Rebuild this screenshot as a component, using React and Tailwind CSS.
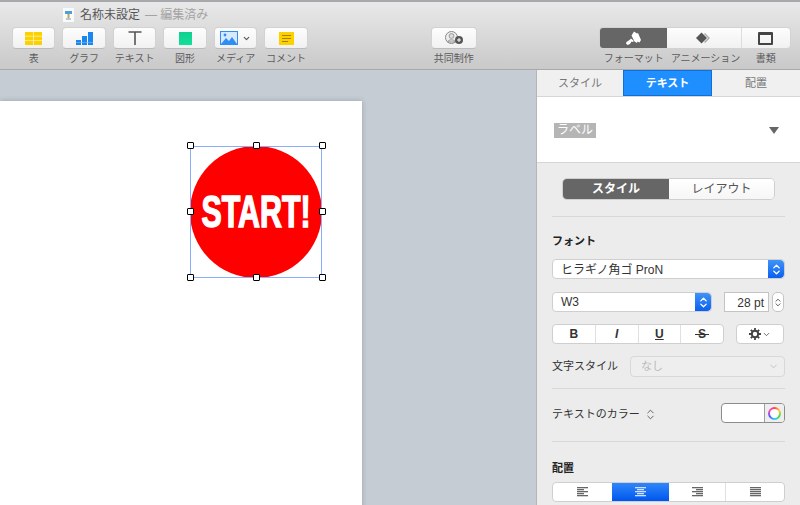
import { ChevronDown, ChevronsUpDown } from "lucide-react";

const font = { fontFamily: '"Liberation Sans", "Noto Sans CJK JP", sans-serif' };

const btn = "h-[22px] bg-gradient-to-b from-[#fdfdfd] to-[#f1f1f1] rounded-[4px] border border-[#d2d2d2] border-b-[#bcbcbc] flex items-center justify-center";

const ToolItem = ({ label, width, children }) => (
  <div className="flex flex-col items-center" style={{ width }}>
    <div className={`${btn} w-full`}>{children}</div>
    <span className="text-[10px] leading-[12px] mt-[4px] text-[#5c5c5c] whitespace-nowrap">{label}</span>
  </div>
);

const Toolbar = () => (
  <div className="h-[70px] shrink-0 bg-gradient-to-b from-[#e9e9ea] to-[#c9c9ca] border-b border-[#a9a9a9] border-t-2 border-t-[#a6a8ab] flex flex-col">
    <div className="h-[25px] flex items-center pl-[63px]">
      <svg width="11" height="14" viewBox="0 0 11 14">
        <rect width="11" height="14" fill="#fafafa" />
        <rect x="2" y="3" width="7" height="3" fill="#4aa0dc" />
        <path d="M4.500 6h2v4h-2z" fill="#d0a53c" />
        <path d="M3 10.500h5v1H3z" fill="#5aa0c0" />
      </svg>
      <span className="ml-[6px] text-[12px] leading-none text-[#555]">名称未設定</span>
      <span className="ml-[5px] text-[12px] leading-none text-[#a3a3a3]">— 編集済み</span>
    </div>
    <div className="flex pl-[12px]">
      <div className="flex gap-[7.2px]">
        <ToolItem label="表" width={43.3}>
          <svg width="17" height="13" viewBox="0 0 17 13">
            <rect width="17" height="13" fill="#fdd000" />
            <path d="M0 4.200h17M0 8.600h17M8.500 0v13" stroke="#fff3b0" strokeWidth="0.8" />
          </svg>
        </ToolItem>
        <ToolItem label="グラフ" width={43.3}>
          <svg width="17" height="13" viewBox="0 0 17 13">
            <rect x="0" y="8" width="5" height="5" fill="#1b86ee" />
            <rect x="6" y="4" width="5" height="9" fill="#1b86ee" />
            <rect x="12" y="0" width="5" height="13" fill="#1b86ee" />
            <path d="M0 10.500h17" stroke="#7cbcf8" strokeWidth="0.6" />
          </svg>
        </ToolItem>
        <ToolItem label="テキスト" width={43.3}>
          <svg width="14" height="14" viewBox="0 0 14 14">
            <path d="M0.500 1h13M7 1v13" stroke="#555" strokeWidth="1.6" fill="none" />
          </svg>
        </ToolItem>
        <ToolItem label="図形" width={43.3}>
          <div className="w-[13px] h-[13px] bg-gradient-to-b from-[#12cf8f] to-[#0fe09a]" />
        </ToolItem>
        <ToolItem label="メディア" width={43.3}>
          <div className="flex items-center gap-[4px]">
            <svg width="18" height="14" viewBox="0 0 18 14">
              <rect width="18" height="14" fill="#2f8ef3" />
              <rect x="1" y="1" width="16" height="12" fill="#d7eafd" />
              <path d="M1 13l5-6 3 3 3-4 5 7z" fill="#2f8ef3" />
              <circle cx="5" cy="4" r="1.400" fill="#2f8ef3" />
            </svg>
            <ChevronDown size={9} strokeWidth={3} color="#555" />
          </div>
        </ToolItem>
        <ToolItem label="コメント" width={43.3}>
          <svg width="15" height="13" viewBox="0 0 15 13">
            <rect width="15" height="13" fill="#fdd000" />
            <path d="M3 3.500h9M3 6.500h9M3 9.500h6" stroke="#8a6d00" strokeWidth="0.8" />
          </svg>
        </ToolItem>
      </div>
      <div className="ml-[123px]">
        <ToolItem label="共同制作" width={46}>
          <svg width="20" height="14" viewBox="0 0 20 14">
            <circle cx="7.500" cy="6.500" r="6" fill="#eee" stroke="#888" />
            <circle cx="7.500" cy="5" r="2.400" fill="#ddd" stroke="#888" strokeWidth="0.8" />
            <path d="M3.500 11c1-3 7-3 8 0z" fill="#ddd" stroke="#888" strokeWidth="0.8" />
            <circle cx="15" cy="9" r="4" fill="#555" />
            <path d="M13 9h4M15 7v4" stroke="#fff" />
          </svg>
        </ToolItem>
      </div>
      <div className="ml-[122px] w-[192px]">
        <div className="h-[22px] flex rounded-[4px] overflow-hidden border border-[#d2d2d2] bg-gradient-to-b from-[#fdfdfd] to-[#f1f1f1]">
          <div className="w-[67px] bg-[#666] flex items-center justify-center">
            <svg width="17" height="15" viewBox="0 0 17 15">
              <path d="M9 0.500l3 2 1-0.500 3 7-1.500 2.500-2-1-0.500 1.500-2.500-1.500-3-6z" fill="#fff" />
              <path d="M6 7.500L9 10l-1.500 1-1-0.500-1.500 2.500-2.500 1L1 12.500 1.500 11 4.500 9z" fill="#fff" />
            </svg>
          </div>
          <div className="w-[75px] border-r border-[#ddd] flex items-center justify-center">
            <svg width="17" height="12" viewBox="0 0 17 12">
              <path d="M10 1l5 5-5 5-1-1 4-4-4-4z" fill="#aaa" />
              <path d="M6.500 0.500L12 6l-5.500 5.500L1 6z" fill="#555" />
            </svg>
          </div>
          <div className="flex-1 flex items-center justify-center">
            <div className="w-[15px] h-[13px] border-2 border-[#444] rounded-[1px] border-t-[3px]" />
          </div>
        </div>
        <div className="flex mt-[4px] text-[10px] leading-[12px] text-[#5c5c5c]">
          <span className="w-[72px] pl-[5px] whitespace-nowrap">フォーマット</span>
          <span className="w-[70px] whitespace-nowrap">アニメーション</span>
          <span className="flex-1 text-center">書類</span>
        </div>
      </div>
    </div>
  </div>
);

const Handle = ({ className }) => (
  <div className={`absolute w-[7px] h-[7px] bg-white border border-black rounded-[1px] ${className}`} />
);

const Canvas = () => (
  <div className="flex-1 relative bg-[#c5ccd4] overflow-hidden">
    <div className="absolute left-0 top-[31px] w-[362px] h-[500px] bg-white shadow-[0_0_5px_rgba(90,100,115,0.4)]" />
    <div className="absolute left-[190px] top-[76px] w-[132px] h-[132px]">
      <div className="absolute inset-0 rounded-full bg-[#ff0000] flex items-center justify-center">
        <span className="text-white font-bold text-[44px] leading-none whitespace-nowrap scale-x-[0.69] [-webkit-text-stroke:1.5px_white]">
          START!
        </span>
      </div>
      <div className="absolute inset-0 border border-[#8aaefc]" />
      <Handle className="left-[-3px] top-[-4px]" />
      <Handle className="left-[63px] top-[-4px]" />
      <Handle className="left-[129px] top-[-4px]" />
      <Handle className="left-[-3px] top-[62px]" />
      <Handle className="left-[129px] top-[62px]" />
      <Handle className="left-[-3px] top-[128px]" />
      <Handle className="left-[63px] top-[128px]" />
      <Handle className="left-[129px] top-[128px]" />
    </div>
  </div>
);

const BlueStepper = ({ width }) => (
  <div
    className="h-full bg-gradient-to-b from-[#3f93f8] to-[#0a5ff0] flex items-center justify-center rounded-r-[4px]"
    style={{ width }}
  >
    <ChevronsUpDown size={13} strokeWidth={2.5} color="#fff" />
  </div>
);

// lines of the paragraph alignment glyphs, x and width per row
const AlignIcon = ({ rows, color }) => (
  <svg width="11" height="10" viewBox="0 0 11 10">
    {rows.map(([x, w], i) => (
      <rect key={i} x={x} y={i * 2} width={w} height="1.300" fill={color} />
    ))}
  </svg>
);

const Sidebar = () => (
  <div className="w-[264px] shrink-0 bg-[#ececec] border-l border-[#b5b5b5] flex flex-col text-[#333]">
    <div className="h-[27px] shrink-0 flex text-[11px] text-[#777] bg-[#f0f0f0] border-b border-[#d6d6d6]">
      <div className="w-[86px] flex items-center justify-center">スタイル</div>
      <div className="w-[89px] flex items-center justify-center bg-[#1f8fff] text-white font-bold border border-[#1170d8]">テキスト</div>
      <div className="flex-1 flex items-center justify-center">配置</div>
    </div>
    <div className="h-[66px] shrink-0 bg-white border-b border-[#d6d6d6] flex items-center justify-between pl-[17px] pr-[21px] pt-[1px]">
      <span className="bg-[#b5b5b5] text-white text-[12px] leading-[15px] px-[3px]">ラベル</span>
      <div className="w-0 h-0 border-l-[5px] border-r-[5px] border-t-[7px] border-l-transparent border-r-transparent border-t-[#666]" />
    </div>
    <div className="px-[15px] flex-1">
      <div className="mx-[10px] mt-[15px] h-[22px] flex rounded-[5px] overflow-hidden border border-[#cfcfcf] text-[12px]">
        <div className="w-[106px] bg-[#666] text-white font-bold flex items-center justify-center">スタイル</div>
        <div className="flex-1 bg-gradient-to-b from-white to-[#f6f6f6] text-[#555] flex items-center justify-center">レイアウト</div>
      </div>
      <div className="h-px bg-[#d8d8d8] mt-[16px]" />
      <div className="text-[11px] leading-[14px] font-bold text-[#222] mt-[17px]">フォント</div>
      <div className="mt-[11px] h-[20px] flex rounded-[4px] bg-white border border-[#cfcfcf] overflow-hidden text-[12px]">
        <span className="flex-1 pl-[8px] leading-[21px] text-[#333]">ヒラギノ角ゴ ProN</span>
        <BlueStepper width={16} />
      </div>
      <div className="mt-[13px] h-[20px] flex items-center">
        <div className="w-[160px] h-[20px] flex rounded-[4px] bg-white border border-[#cfcfcf] overflow-hidden text-[12px]">
          <span className="flex-1 pl-[8px] leading-[19px]">W3</span>
          <BlueStepper width={16} />
        </div>
        <div className="ml-[12px] w-[45px] h-[20px] bg-white border border-[#c4c4c4] text-[12px] leading-[20px] text-right pr-[4px]">28 pt</div>
        <div className="ml-[3px] w-[12px] h-[20px] bg-white border border-[#c4c4c4] rounded-[5px] flex items-center justify-center">
          <ChevronsUpDown size={11} strokeWidth={2} color="#444" />
        </div>
      </div>
      <div className="mt-[12px] h-[20px] flex items-center">
        <div className="w-[172px] h-[20px] flex bg-white rounded-[4px] border border-[#cfcfcf] text-[12px] text-[#333] divide-x divide-[#e0e0e0]">
          <span className="flex-1 flex items-center justify-center font-bold">B</span>
          <span className="flex-1 flex items-center justify-center font-bold italic">I</span>
          <span className="flex-1 flex items-center justify-center font-bold underline">U</span>
          <span className="flex-1 flex items-center justify-center relative font-bold">
            S
            <span className="absolute left-[14px] right-[14px] top-[9px] h-px bg-[#333]" />
          </span>
        </div>
        <div className="ml-[12px] w-[48px] h-[20px] bg-white rounded-[4px] border border-[#cfcfcf] flex items-center justify-center gap-[1px]">
          <svg width="12" height="12" viewBox="0 0 12 12">
            <circle cx="6" cy="6" r="3.200" fill="none" stroke="#444" strokeWidth="2" />
            <path d="M6 0v2.500M6 9.500V12M0 6h2.500M9.500 6H12M1.800 1.800l1.800 1.800M8.400 8.400l1.800 1.800M1.800 10.200l1.800-1.800M8.400 3.600l1.800-1.800" stroke="#444" strokeWidth="1.800" />
          </svg>
          <ChevronDown size={9} strokeWidth={2} color="#444" />
        </div>
      </div>
      <div className="mt-[12px] h-[21px] flex items-center justify-between">
        <span className="text-[11px] text-[#333]">文字スタイル</span>
        <div className="w-[155px] h-[21px] border border-[#d8d8d8] rounded-[4px] bg-[#eeeeee] flex items-center justify-between pl-[10px] pr-[5px] text-[11px] text-[#bbb]">
          なし
          <ChevronDown size={11} strokeWidth={2} color="#c0c0c0" />
        </div>
      </div>
      <div className="h-px bg-[#d8d8d8] mt-[11px]" />
      <div className="mt-[14px] h-[20px] flex items-center justify-between">
        <div className="flex items-center text-[11px] text-[#333] pt-[2px]">
          テキストのカラー
          <ChevronsUpDown size={13} strokeWidth={1.500} color="#444" className="ml-[4px]" />
        </div>
        <div className="w-[64px] h-[20px] rounded-[4px] border border-[#8c8c8c] bg-white flex justify-end overflow-hidden">
          <div className="w-[20px] border-l border-[#a0a0a0] bg-[#eee] flex items-center justify-center">
            <div
              className="w-[13px] h-[13px] rounded-full p-[2px]"
              style={{ background: "conic-gradient(#f44,#fc3,#4d4,#3cf,#55f,#f4c,#f44)" }}
            >
              <div className="w-[9px] h-[9px] rounded-full bg-white" />
            </div>
          </div>
        </div>
      </div>
      <div className="h-px bg-[#d8d8d8] mt-[18px]" />
      <div className="text-[11px] leading-[14px] font-bold text-[#222] mt-[19px]">配置</div>
      <div className="mt-[7px] h-[20px] flex bg-white rounded-[4px] border border-[#cfcfcf] overflow-hidden">
        <div className="w-[59px] flex items-center justify-center">
          <AlignIcon color="#666" rows={[[0, 11], [0, 7], [0, 11], [0, 7], [0, 11]]} />
        </div>
        <div className="w-[57px] bg-gradient-to-b from-[#2f86f8] to-[#0055ee] flex items-center justify-center">
          <AlignIcon color="#cfe0ff" rows={[[0, 11], [2, 7], [0, 11], [2, 7], [0, 11]]} />
        </div>
        <div className="w-[57px] flex items-center justify-center border-r border-[#e0e0e0]">
          <AlignIcon color="#666" rows={[[0, 11], [4, 7], [0, 11], [4, 7], [0, 11]]} />
        </div>
        <div className="flex-1 flex items-center justify-center">
          <AlignIcon color="#666" rows={[[0, 11], [0, 11], [0, 11], [0, 11], [0, 11]]} />
        </div>
      </div>
    </div>
  </div>
);

export default function App() {
  return (
    <div className="w-[800px] h-[505px] flex flex-col overflow-hidden" style={font}>
      <Toolbar />
      <div className="flex-1 flex min-h-0">
        <Canvas />
        <Sidebar />
      </div>
    </div>
  );
}
